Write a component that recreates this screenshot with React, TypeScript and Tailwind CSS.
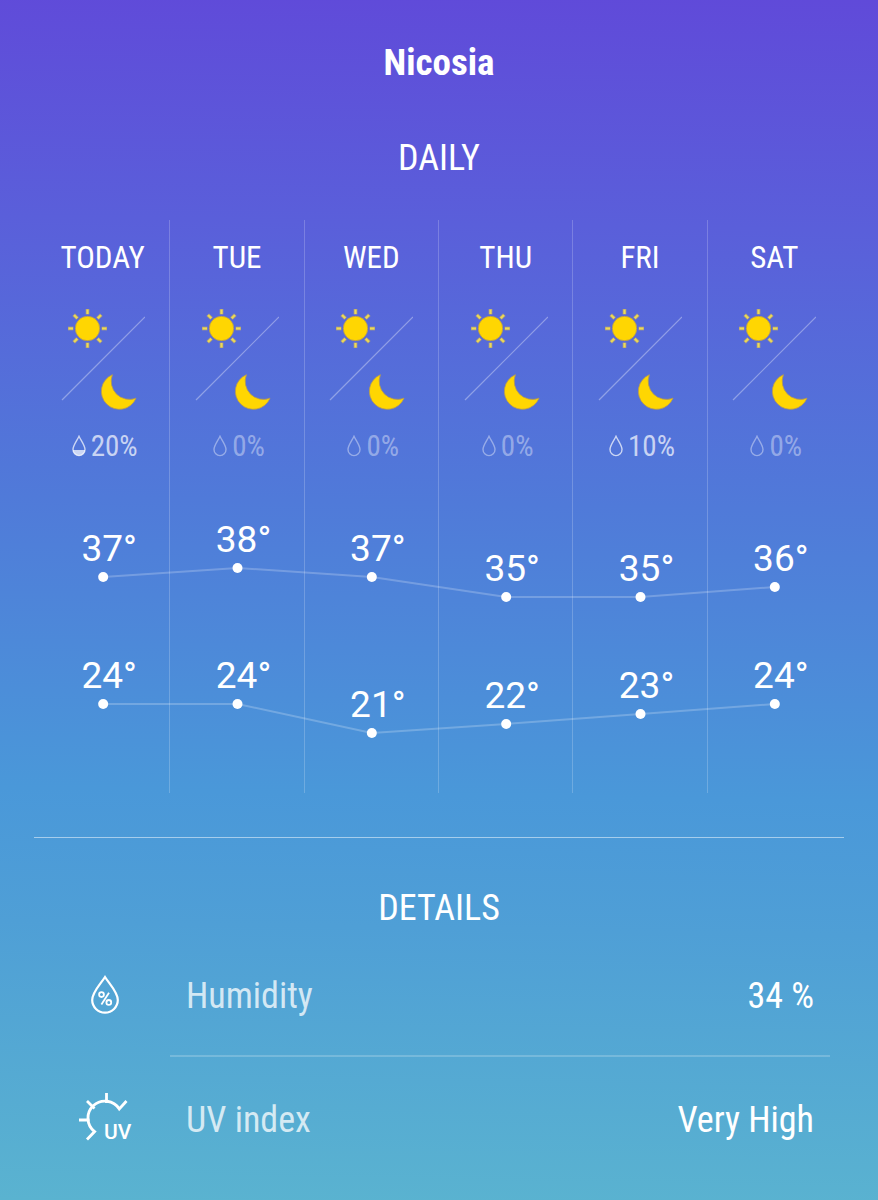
import React from 'react';

type Day = {
  name: string;
  rain: number;
  high: number;
  low: number;
};

const days: Day[] = [
  { name: 'TODAY', rain: 20, high: 37, low: 24 },
  { name: 'TUE', rain: 0, high: 38, low: 24 },
  { name: 'WED', rain: 0, high: 37, low: 21 },
  { name: 'THU', rain: 0, high: 35, low: 22 },
  { name: 'FRI', rain: 10, high: 35, low: 23 },
  { name: 'SAT', rain: 0, high: 36, low: 24 },
];

const DayNightIcon: React.FC = () => (
  <svg width="84" height="104" viewBox="0 0 84 104" fill="none" aria-hidden="true">
    <path d="M1 92 84 9" stroke="#fff" strokeOpacity="0.35" strokeWidth="1.2" />
    {/* Sun */}
    <g stroke="#b3a375" strokeWidth="3.6">
      {[0, 45, 90, 135, 180, 225, 270, 315].map((angle) => (
        <path key={angle} d="M26.5 6.4V1" transform={`rotate(${angle} 26.5 20.5)`} />
      ))}
    </g>
    <g stroke="#eddb58" strokeWidth="2">
      {[0, 45, 90, 135, 180, 225, 270, 315].map((angle) => (
        <path key={angle} d="M26.5 6V1.6" transform={`rotate(${angle} 26.5 20.5)`} />
      ))}
    </g>
    <circle cx="26.5" cy="20.5" r="12.2" fill="#ffd602" stroke="#b99c4c" strokeWidth="0.8" />
    {/* Moon */}
    <path
      d="M51.4 66.7A18 18 0 1 0 75 90.2A18.2 18.2 0 0 1 51.4 66.7Z"
      fill="#ffd602"
      stroke="#b99c4c"
      strokeWidth="0.8"
    />
  </svg>
);

const DropIcon: React.FC<{ half: boolean }> = ({ half }) => (
  <svg width="14" height="22" viewBox="0 0 14 22" fill="none" aria-hidden="true">
    <path
      d="M7 1.2C5 5.4 1 10.4 1 14.4a6 6.2 0 0 0 12 0C13 10.4 9 5.4 7 1.2Z"
      stroke="currentColor"
      strokeWidth="1.4"
    />
    {half && <path d="M1 15h12a6 5.8 0 0 1-12 0Z" fill="currentColor" />}
  </svg>
);

const HumidityIcon: React.FC = () => (
  <svg width="52" height="52" viewBox="0 0 52 52" fill="none" stroke="#fff" aria-hidden="true">
    <path d="M26 8C22 14.5 13.2 23 13.2 31a12.8 12.6 0 0 0 25.6 0C38.8 23 30 14.5 26 8Z" strokeWidth="2.2" />
    <g strokeWidth="1.8">
      <circle cx="22.5" cy="25.6" r="2.4" />
      <circle cx="29.8" cy="33.4" r="2.4" />
      <path d="M30 23.8 22.4 35.4" />
    </g>
  </svg>
);

const UvIcon: React.FC = () => (
  <svg
    width="52"
    height="52"
    viewBox="0 0 52 52"
    fill="none"
    stroke="#fff"
    strokeWidth="2.8"
    className="overflow-visible"
    aria-hidden="true"
  >
    <path d="M47.5 8 40.3 16A17 17 0 1 0 15.6 38.6L8 46.4" />
    <path d="M27.5 0v10M8 8l7.5 7.5M0 27h10.5" />
    <text x="25" y="46" fill="#fff" stroke="none" className="font-['Roboto',sans-serif] text-[21px] font-medium">
      UV
    </text>
  </svg>
);

const columnX = (i: number) => `${((i + 0.5) / days.length) * 100}%`;
const tempY = (temp: number) => Math.round(67.5 + (38 - temp) * 9.75);

const TemperatureChart: React.FC<{ temps: number[] }> = ({ temps }) => (
  <g>
    {temps.slice(1).map((temp, i) => (
      <line
        key={i}
        x1={columnX(i)}
        y1={tempY(temps[i])}
        x2={columnX(i + 1)}
        y2={tempY(temp)}
        stroke="#fff"
        strokeOpacity="0.22"
        strokeWidth="2"
      />
    ))}
    {temps.map((temp, i) => (
      <g key={i}>
        <circle cx={columnX(i)} cy={tempY(temp)} r="5" fill="#fff" />
        <text
          x={columnX(i)}
          y={tempY(temp) - 16}
          dx="6"
          textAnchor="middle"
          fill="#fff"
          className="font-['Roboto',sans-serif] text-[37px]"
        >
          {temp}°
        </text>
      </g>
    ))}
  </g>
);

const details = [
  { label: 'Humidity', value: '34 %', icon: <HumidityIcon /> },
  { label: 'UV index', value: 'Very High', icon: <UvIcon /> },
];

const App: React.FC = () => {
  return (
    <main className="min-h-screen bg-[linear-gradient(181deg,#604ad9_0%,#5a5fda_19%,#507ad9_42%,#4a98d9_66%,#4f9fd6_77%,#5ab3d0_100%)] pt-[43px] font-['Roboto_Condensed','Roboto',sans-serif] text-white">
      <h1 className="text-center text-[37px] leading-10 font-bold">Nicosia</h1>

      <section className="mt-[55px]">
        <h2 className="text-center text-[36px] leading-10">DAILY</h2>

        <div className="relative mx-9 mt-[42px]">
          <ul className="grid grid-cols-6">
            {days.map((day) => (
              <li
                key={day.name}
                className="flex h-[573px] flex-col items-center border-r border-white/20 pt-[18px] last:border-transparent"
              >
                <h3 className="text-[31px] leading-10">{day.name}</h3>
                <div className="mt-[30px]">
                  <DayNightIcon />
                </div>
                <div
                  className={`mt-[18px] flex items-center gap-[5px] pl-1 text-[29px] leading-8 ${
                    day.rain > 0 ? 'text-white/70' : 'text-white/40'
                  }`}
                >
                  <DropIcon half={day.rain >= 20} />
                  {day.rain}%
                </div>
              </li>
            ))}
          </ul>

          {/* Highs and lows run across all the columns */}
          <svg className="absolute inset-x-0 bottom-0 h-[293px] w-full">
            <TemperatureChart temps={days.map((day) => day.high)} />
            <TemperatureChart temps={days.map((day) => day.low)} />
          </svg>
        </div>
      </section>

      <hr className="mx-[34px] mt-11 border-white/50" />

      <section className="mt-[50px]">
        <h2 className="text-center text-[36px] leading-10">DETAILS</h2>

        <dl className="mt-[5px] pr-12 pl-9">
          {details.map((item) => (
            <div key={item.label} className="group flex items-stretch">
              <div className="flex w-[138px] items-center justify-center">{item.icon}</div>
              <div className="-ml-1 flex h-[124px] flex-1 items-center justify-between border-b-2 border-white/20 px-4 pt-1 text-[36px] leading-10 group-last:border-transparent">
                <dt className="text-white/75">{item.label}</dt>
                <dd>{item.value}</dd>
              </div>
            </div>
          ))}
        </dl>
      </section>
    </main>
  );
};

export default App;
